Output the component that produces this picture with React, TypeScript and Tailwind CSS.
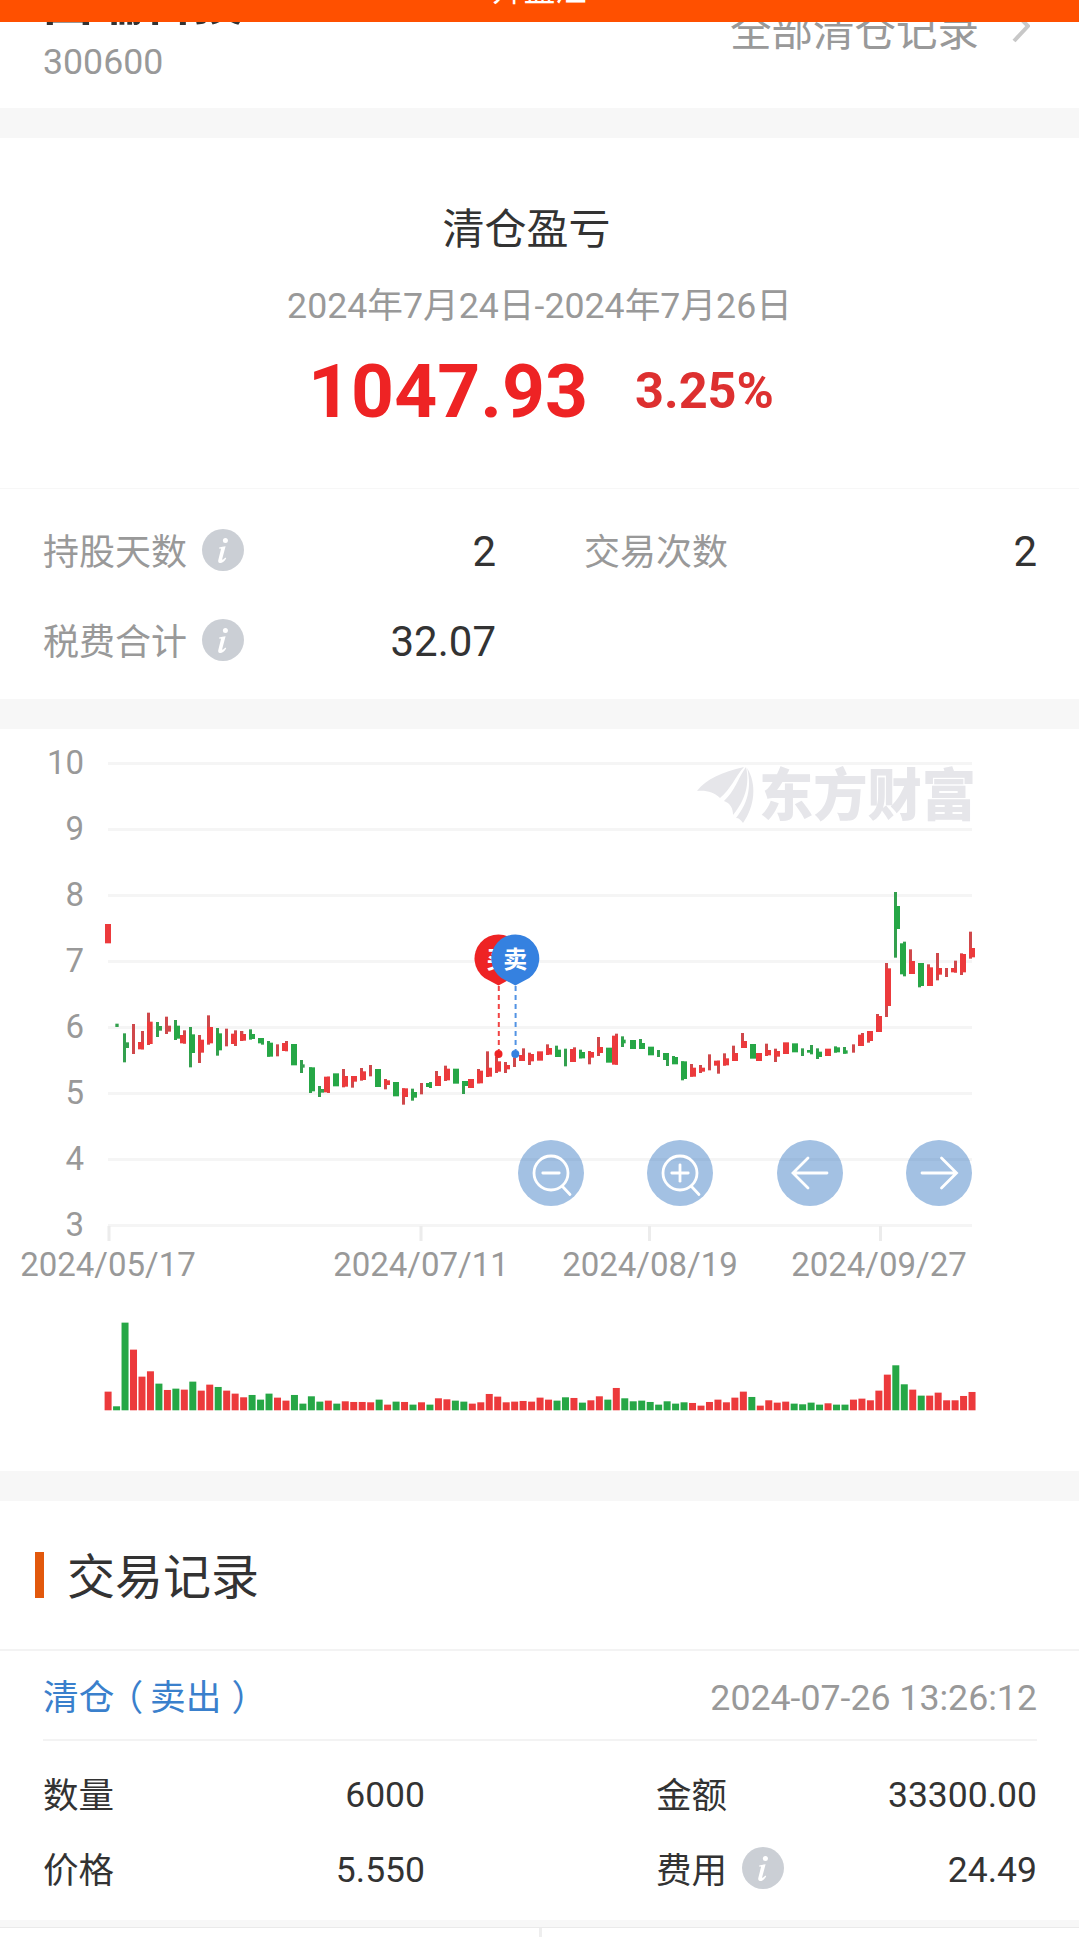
import React from "react";

type Candle = [c: "R" | "G", ...rects: number[][]];

// Each candle lists its rectangles as [left, right, top, bottom] in thirds of a pixel,
// relative to the origin of the group that it belongs to.
const groups: { ox: number; oy: number; items: Candle[] }[] = [
  {
    ox: 90,
    oy: 900,
    items: [
      ["R", [45, 63, 72, 130]],
      ["G", [76, 86, 371, 381]],
      ["G", [99, 108, 400, 487], [108, 117, 427, 444]],
      ["R", [126, 135, 372, 462]],
      ["R", [153, 162, 393, 448], [144, 162, 426, 448]],
      ["R", [171, 180, 338, 435], [171, 188, 365, 432]],
      ["G", [198, 207, 366, 411], [207, 216, 378, 392]],
      ["R", [225, 234, 350, 402], [234, 243, 377, 395]],
      ["G", [252, 261, 360, 420], [252, 270, 377, 416]],
      ["R", [279, 288, 391, 431], [270, 288, 405, 430]],
      ["G", [297, 306, 381, 502], [297, 315, 403, 459]],
      ["R", [324, 333, 405, 489], [324, 342, 419, 458]],
      ["R", [351, 360, 346, 434], [351, 369, 381, 430]],
      ["G", [378, 387, 384, 467], [378, 396, 400, 451]],
      ["R", [405, 414, 386, 439]],
      ["R", [432, 441, 391, 438], [423, 441, 401, 432]],
      ["R", [450, 460, 393, 423], [450, 468, 402, 422]],
      ["G", [477, 486, 388, 419], [477, 495, 402, 417]],
      ["G", [513, 522, 414, 434], [504, 522, 414, 430]],
      ["G", [531, 540, 423, 470], [531, 549, 428, 470]],
      ["R", [558, 567, 433, 469]],
      ["R", [585, 594, 423, 454], [576, 594, 429, 453]],
      ["G", [603, 621, 432, 496]],
      ["G", [630, 639, 480, 519], [639, 644, 493, 503]],
      ["G", [657, 666, 502, 579], [657, 675, 502, 574]],
      ["G", [684, 693, 558, 591], [693, 702, 567, 578]],
    ],
  },
  {
    ox: 320,
    oy: 900,
    items: [
      ["R", [21, 30, 530, 579], [12, 30, 530, 577]],
      ["G", [39, 57, 520, 559]],
      ["R", [66, 75, 507, 562], [66, 84, 528, 560]],
      ["R", [93, 102, 528, 563], [93, 111, 528, 545]],
      ["R", [120, 129, 504, 542], [120, 138, 514, 540]],
      ["R", [147, 156, 495, 529]],
      ["G", [165, 183, 507, 561]],
      ["R", [192, 201, 537, 568], [192, 210, 541, 555]],
      ["G", [219, 237, 546, 589]],
      ["R", [246, 255, 565, 614], [246, 264, 565, 591]],
      ["G", [273, 282, 566, 602], [273, 291, 576, 593]],
      ["R", [300, 309, 549, 583]],
      ["G", [327, 336, 546, 564], [318, 336, 549, 561]],
      ["R", [345, 354, 513, 558], [345, 363, 528, 558]],
      ["R", [372, 381, 497, 543], [372, 390, 506, 541]],
      ["G", [399, 417, 506, 551]],
      ["G", [426, 435, 543, 582], [426, 444, 543, 558]],
      ["R", [444, 462, 537, 564]],
      ["R", [471, 480, 507, 550], [471, 489, 512, 550]],
      ["R", [498, 507, 454, 531], [498, 516, 503, 530]],
      ["R", [525, 534, 470, 519], [525, 543, 484, 515]],
      ["R", [552, 561, 486, 519], [552, 570, 495, 508]],
      ["R", [579, 588, 472, 501]],
      ["R", [606, 615, 445, 483], [597, 615, 465, 483]],
      ["R", [624, 633, 458, 495], [624, 642, 462, 484]],
      ["R", [651, 669, 454, 482]],
      ["R", [678, 687, 433, 465], [678, 696, 444, 464]],
    ],
  },
  {
    ox: 540,
    oy: 900,
    items: [
      ["G", [45, 54, 437, 471], [45, 63, 449, 471]],
      ["G", [72, 81, 446, 499]],
      ["R", [99, 108, 442, 486], [90, 108, 447, 486]],
      ["G", [117, 126, 449, 475], [117, 135, 456, 475]],
      ["R", [144, 153, 453, 493], [144, 162, 456, 473]],
      ["R", [171, 180, 411, 468], [171, 189, 441, 459]],
      ["G", [198, 216, 443, 488]],
      ["R", [225, 234, 401, 494], [216, 234, 407, 494]],
      ["G", [243, 252, 409, 441], [243, 257, 419, 430]],
      ["G", [270, 288, 420, 447]],
      ["G", [297, 306, 417, 447], [297, 315, 429, 447]],
      ["G", [324, 342, 440, 466]],
      ["G", [351, 360, 450, 471]],
      ["G", [378, 387, 459, 498], [369, 387, 459, 480]],
      ["G", [396, 405, 468, 492], [396, 414, 471, 493]],
      ["G", [423, 432, 484, 541], [423, 441, 484, 537]],
      ["R", [450, 459, 492, 530], [450, 468, 503, 530]],
      ["R", [477, 486, 495, 519], [477, 495, 503, 515]],
      ["R", [504, 513, 463, 511]],
      ["R", [531, 540, 482, 521], [522, 540, 482, 497]],
      ["R", [549, 558, 460, 497], [549, 567, 475, 496]],
      ["R", [576, 585, 437, 483], [576, 594, 459, 483]],
      ["R", [603, 612, 399, 444], [603, 621, 423, 444]],
      ["G", [630, 648, 432, 476]],
      ["R", [648, 666, 459, 483]],
      ["R", [675, 684, 431, 468], [675, 693, 450, 466]],
      ["R", [702, 711, 446, 486], [702, 720, 453, 470]],
    ],
  },
  {
    ox: 760,
    oy: 740,
    items: [
      ["R", [69, 87, 907, 942]],
      ["G", [96, 114, 910, 937]],
      ["G", [123, 132, 925, 948]],
      ["G", [150, 159, 915, 943], [141, 159, 930, 938]],
      ["G", [168, 177, 925, 957], [168, 186, 935, 951]],
      ["R", [195, 213, 926, 948]],
      ["G", [222, 231, 919, 938], [222, 240, 922, 937]],
      ["G", [249, 258, 921, 941], [249, 263, 931, 941]],
      ["R", [276, 285, 913, 938]],
      ["R", [303, 312, 879, 918], [294, 312, 884, 918]],
      ["R", [321, 330, 873, 908], [321, 339, 873, 903]],
      ["R", [348, 357, 822, 876], [348, 366, 828, 876]],
      ["R", [375, 384, 669, 831], [375, 393, 685, 798]],
      ["G", [402, 411, 456, 653], [402, 420, 498, 567]],
      ["G", [429, 438, 605, 709], [420, 438, 610, 703]],
      ["R", [447, 456, 628, 702], [447, 465, 663, 702]],
      ["G", [474, 483, 669, 742], [474, 492, 669, 738]],
      ["R", [501, 510, 673, 738], [501, 519, 682, 738]],
      ["R", [528, 537, 639, 721], [528, 546, 684, 704]],
      ["R", [555, 564, 684, 711]],
      ["R", [582, 591, 662, 698], [573, 591, 684, 697]],
      ["R", [600, 609, 640, 705], [600, 618, 642, 697]],
      ["R", [627, 636, 575, 656], [627, 645, 624, 652]],
    ],
  },
];

// Volume per trading day: direction and bar height in thirds of a pixel.
const volumes =
  "R56 G12 G263 R182 R101 R117 G80 R61 G65 R62 G86 R59 R77 G70 R59 R50 R39 G46 G32 G50 R38 R29 G46 G20 G42 G26 R29 G20 R27 R25 R25 R24 G32 R17 G26 R25 G17 R24 G17 R36 R33 G29 G26 R20 R24 R49 R41 R24 R26 R28 R26 R38 R32 G29 G39 R37 G23 R30 R42 G32 R67 G36 G27 G29 G25 G17 G27 G20 G24 R22 R14 R25 R32 R24 R38 R56 G40 R14 R30 R23 R26 G20 G18 G23 G17 R21 G17 G17 R32 R35 R30 R59 R107 G135 G78 R62 G44 R44 R53 R30 R30 R43 R55"
    .split(" ")
    .map((v) => ({ up: v[0] === "R", h: Number(v.slice(1)) / 3 }));

const RED = "#ec3a3c";
const GREEN = "#26a746";
const RED_WICK = "#cf484b";
const GREEN_WICK = "#33a04e";
const CHART_TOP = 729;

const gridLines = [10, 9, 8, 7, 6, 5, 4, 3].map((label, i) => ({ label, y: 763.5 + i * 66 }));
const ticks = [
  { x: 109, labelX: 108, label: "2024/05/17" },
  { x: 421, labelX: 421, label: "2024/07/11" },
  { x: 649.5, labelX: 650, label: "2024/08/19" },
  { x: 880.5, labelX: 879, label: "2024/09/27" },
];

function Info() {
  return (
    <svg className="block h-[42px] w-[42px] shrink-0" viewBox="0 0 42 42">
      <circle cx="21" cy="21" r="21" fill="#cbcfd5" />
      <circle cx="23.4" cy="11.6" r="2.5" fill="#fff" />
      <path
        d="M17.2 18.6 C19.2 17.8 21.4 17.4 23.6 17.2 L20.2 30 C19.9 31.2 20.8 31.2 23.4 28.6 L24.2 29.4 C21.8 33 19.8 34.2 18 34 C16.2 33.8 15.9 32.2 16.4 30.4 L18.9 20.4 C19.1 19.6 18.6 19.5 17 19.6 Z"
        fill="#fff"
      />
    </svg>
  );
}

function Pin({ x, color, text }: { x: number; color: string; text: string }) {
  return (
    <g>
      <line x1={x + 0.3} x2={x + 0.3} y1={986} y2={1050} stroke={color} strokeWidth="2" strokeDasharray="5 4" opacity="0.85" />
      <circle cx={x} cy={1054} r="4" fill={color} />
      <path
        d={`M${x} 985.5 L${x - 14} 978 A24 24 0 1 1 ${x + 14} 978 Z`}
        fill={color}
      />
      <text x={x} y={967.5} textAnchor="middle" fontSize="24" fontWeight="700" fill="#fff">
        {text}
      </text>
    </g>
  );
}

function Chart() {
  return (
    <svg className="block h-[742px] w-full" viewBox={`0 ${CHART_TOP} 1079 742`}>
      {gridLines.map((g) => (
        <g key={g.label}>
          <rect x="108" y={g.y - 1.5} width="864" height="3" fill="#f5f5f5" />
          <text x="84" y={g.y + 10.5} textAnchor="end" fontSize="33" fill="#999">
            {g.label}
          </text>
        </g>
      ))}
      {ticks.map((t) => (
        <g key={t.label}>
          <rect x={t.x - 1.5} y="1226" width="3" height="15" fill="#ececec" />
          <text x={t.labelX} y="1276" textAnchor="middle" fontSize="33" fill="#999">
            {t.label}
          </text>
        </g>
      ))}
      <g fill="#e6e6ea">
        <path d="M697 791 C706 779 722 772 744 767 C735 777 731 789 720 798 C714 792 706 790 697 791 Z" />
        <path d="M724 801 C735 791 738 778 746 767 C749 780 748 797 733 815 C733 808 730 803 724 801 Z" />
        <path d="M736 818 C750 801 751 783 747 768 C757 784 755 806 743 823 C741 820 739 818 736 818 Z" />
        <text x="759" y="815" fontSize="56" fontWeight="900" textLength="217" lengthAdjust="spacingAndGlyphs">
          东方财富
        </text>
      </g>
      {groups.map((g) =>
        g.items.map(([c, ...rects], i) =>
          (rects as number[][]).map(([l, r, t, b], k) => (
            <rect
              key={`${g.ox}-${i}-${k}`}
              x={g.ox + l / 3}
              y={g.oy + t / 3}
              width={(r - l) / 3}
              height={(b - t) / 3}
              fill={r - l < 12 ? (c === "R" ? RED_WICK : GREEN_WICK) : c === "R" ? RED : GREEN}
            />
          )),
        ),
      )}
      <Pin x={498.5} color="#ee2324" text="买" />
      <Pin x={515.3} color="#3581e0" text="卖" />
      {volumes.map((v, i) => (
        <rect
          key={i}
          x={104.6 + i * 8.47}
          y={1410.3 - v.h}
          width="7"
          height={v.h}
          fill={v.up ? RED : GREEN}
        />
      ))}
      {[551, 680, 810, 939].map((x) => (
        <circle key={x} cx={x} cy="1173" r="33" fill="rgba(51,117,193,0.45)" />
      ))}
      <g stroke="#fff" strokeWidth="2.8" fill="none" strokeLinecap="round">
        {[551, 680].map((x) => (
          <g key={x}>
            <circle cx={x} cy="1173" r="17" />
            <path d={`M${x - 8.2} 1173 h16.4 M${x + 11.5} 1186.5 l7.5 8`} />
          </g>
        ))}
        <path d="M680 1164.8 v16.4" />
        <path d="M827 1173 H793.5 M808 1158 L793 1173 L808 1188" />
        <path d="M922 1173 H955.5 M941.5 1158 L956.5 1173 L941.5 1188" />
      </g>
    </svg>
  );
}

function Stat({ label, value, info }: { label: string; value: string; info?: boolean }) {
  return (
    <div className="flex h-[90px] items-center">
      <span className="pt-[5px] text-[36px] text-[#999]">{label}</span>
      {info && (
        <span className="ml-[15px]">
          <Info />
        </span>
      )}
      <span className="ml-auto pt-[3px] text-[42px]">{value}</span>
    </div>
  );
}

function Field({ label, value, info }: { label: string; value: string; info?: boolean }) {
  return (
    <div className="flex h-[75px] items-center text-[35.5px]">
      <span className="pt-0.5">{label}</span>
      {info && (
        <span className="-mt-[5px] ml-[15px]">
          <Info />
        </span>
      )}
      <span className="ml-auto">{value}</span>
    </div>
  );
}

export default function App() {
  return (
    <div className="h-[1937px] w-[1079px] overflow-hidden bg-[#f7f7f7] font-[Roboto,'Noto_Sans_CJK_SC',sans-serif] leading-none text-[#333]">
      <header className="flex h-[22px] items-end justify-center overflow-hidden bg-[#ff5000] text-[31.5px] text-white">
        <span className="mb-4">升盈汇</span>
      </header>

      <section className="flex h-[86px] justify-between overflow-hidden bg-white pl-[43px] pr-[49px]">
        <div className="-mt-[44px]">
          <div className="text-[50px] font-bold">国瑞科技</div>
          <div className="mt-[17px] text-[35.7px] text-[#999]">300600</div>
        </div>
        <div className="-mt-[11px] flex h-[42px] items-center text-[41.5px] text-[#999]">
          全部清仓记录
          <svg className="ml-[33px] h-[42px] w-[18px]" viewBox="0 0 18 42">
            <path d="M2 1 L16 15 L2 30" fill="none" stroke="#c8c8c8" strokeWidth="4" />
          </svg>
        </div>
      </section>

      <section className="mt-[30px] flex h-[350px] flex-col items-center bg-white pt-[71px]">
        <div className="mr-[26px] text-[42px]">清仓盈亏</div>
        <div className="mt-[38px] text-[35.7px] text-[#999]">2024年7月24日-2024年7月26日</div>
        <div className="ml-[3px] mt-[29px] flex items-center gap-[47px] font-bold">
          <span className="text-[75px] text-[#ee2324]">1047.93</span>
          <span className="text-[50.5px] text-[#dd3030]">3.25%</span>
        </div>
      </section>

      <section className="mt-px grid h-[210px] grid-cols-2 content-start gap-x-[88px] bg-white pl-[43px] pr-[42px] pt-[16px]">
        <Stat label="持股天数" value="2" info />
        <Stat label="交易次数" value="2" />
        <Stat label="税费合计" value="32.07" info />
      </section>

      <section className="mt-[30px] bg-white">
        <Chart />
      </section>

      <section className="mt-[30px] h-[419px] bg-white">
        <div className="flex h-[148px] items-center pl-[35px]">
          <span className="h-[46px] w-[9px] bg-[#e2580c]" />
          <span className="ml-[23px] pt-[5px] text-[48px]">交易记录</span>
        </div>
        <div className="border-t-2 border-[#f3f3f3] pl-[43px] pr-[42px]">
          <div className="flex h-[90px] items-center justify-between border-b-2 border-[#f3f3f3] pt-[7px] text-[35.7px]">
            <span className="text-[#3a80cc]">
              清仓<span className="relative -left-[7px]">（</span>卖出<span className="relative left-[10px]">）</span>
            </span>
            <span className="text-[#999]">2024-07-26 13:26:12</span>
          </div>
          <div className="grid grid-cols-[382px_381px] justify-between pt-[17px]">
            <Field label="数量" value="6000" />
            <Field label="金额" value="33300.00" />
            <Field label="价格" value="5.550" />
            <Field label="费用" value="24.49" info />
          </div>
        </div>
      </section>

      <footer className="mt-[7px] grid h-[10px] grid-cols-[542px_1fr] divide-x-3 divide-[#eee] border-t border-[#eaeaea] bg-white">
        <div />
        <div />
      </footer>
    </div>
  );
}
